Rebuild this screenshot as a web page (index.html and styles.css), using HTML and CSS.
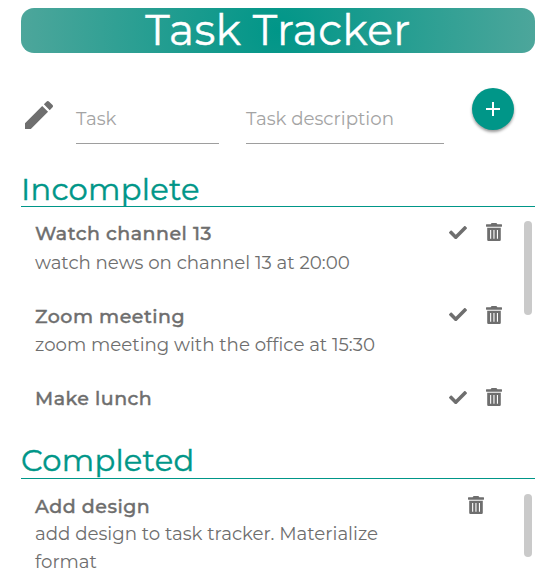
FILE: index.html
```html
<!DOCTYPE html>
<html lang="en">
<head>
<meta charset="utf-8">
<title>Task Tracker</title>
<link rel="stylesheet" href="styles.css">
</head>
<body>
<svg class="sprite" aria-hidden="true">
  <symbol id="check" viewBox="0 65 512 382"><path fill="currentColor" d="M173.898 439.404l-166.4-166.4c-9.997-9.997-9.997-26.206 0-36.204l36.203-36.204c9.997-9.998 26.207-9.998 36.204 0L192 312.69 432.095 72.596c9.997-9.997 26.207-9.997 36.204 0l36.203 36.204c9.997 9.997 9.997 26.206 0 36.204l-294.4 294.401c-9.998 9.997-26.207 9.997-36.204-.001z"/></symbol>
  <symbol id="trash" viewBox="0 0 16 18"><path fill="currentColor" fill-rule="evenodd" d="M.4 1.3H4.6L5.6 0h4.8l1 1.3h4.2q.4 0 .4.4v1.6q0 .4-.4.4H.4q-.4 0-.4-.4V1.7q0-.4.4-.4zM1.2 4.7h13.6v12.1a1.2 1.2 0 0 1-1.2 1.2h-11.2a1.2 1.2 0 0 1-1.2-1.2zM4.1 7v8.8h1.1V7zm3.3 0v8.8h1.1V7zm3.5 0v8.8H12V7z"/></symbol>
</svg>
<main class="app">
  <h1 class="title">Task Tracker</h1>
  <form class="entry">
    <svg class="pencil" viewBox="3 3 18 18"><path d="M3 17.25V21h3.75L17.81 9.94l-3.75-3.75L3 17.25zM20.71 7.04c.39-.39.39-1.02 0-1.41l-2.34-2.34c-.39-.39-1.02-.39-1.41 0l-1.83 1.83 3.75 3.75 1.83-1.83z"/></svg>
    <label class="field name">Task</label>
    <label class="field detail">Task description</label>
    <button class="add" type="button" aria-label="Add"><svg viewBox="0 0 14 14"><path d="M7 0v14M0 7h14"/></svg></button>
  </form>
  <section class="pending">
    <h2 class="heading">Incomplete</h2>
    <div class="list">
      <ul class="tasks">
        <li class="task"><div class="copy"><h3>Watch channel 13</h3><p>watch news on channel 13 at 20:00</p></div><div class="actions"><svg class="check"><use href="#check"/></svg><svg class="trash"><use href="#trash"/></svg></div></li>
        <li class="task"><div class="copy"><h3>Zoom meeting</h3><p>zoom meeting with the office at 15:30</p></div><div class="actions"><svg class="check"><use href="#check"/></svg><svg class="trash"><use href="#trash"/></svg></div></li>
        <li class="task"><div class="copy"><h3>Make lunch</h3></div><div class="actions"><svg class="check"><use href="#check"/></svg><svg class="trash"><use href="#trash"/></svg></div></li>
      </ul>
      <div class="thumb"></div>
    </div>
  </section>
  <section class="done">
    <h2 class="heading">Completed</h2>
    <div class="list">
      <ul class="tasks">
        <li class="task"><div class="copy"><h3>Add design</h3><p>add design to task tracker. Materialize format</p></div><div class="actions"><svg class="trash"><use href="#trash"/></svg></div></li>
      </ul>
      <div class="thumb"></div>
    </div>
  </section>
</main>
</body>
</html>
```

FILE: styles.css
```css
* { box-sizing: border-box; }
body { margin: 0; height: 579px; overflow: hidden; background: #fff; color: #6e6e6e; font-family: Montserrat, Inter, sans-serif; }
h1, h2, h3, p, ul { margin: 0; padding: 0; list-style: none; }
.sprite { display: none; }
.app { width: 514px; margin: 8px 0 0 21px; }
.title { height: 45px; border-radius: 13px; background: radial-gradient(circle, #009688, #4da69b); color: #fff; text-align: center; font-size: 42.6px; font-weight: 400; letter-spacing: .35px; line-height: 45px; -webkit-text-stroke: .4px; }
.entry { display: flex; height: 122px; padding: 35px 0 0 4px; align-items: flex-start; }
.pencil { width: 28px; height: 28px; margin-top: 13px; fill: #6e6e6e; }
.field { height: 56px; border-bottom: 1px solid #9e9e9e; color: #a4a4a4; font-size: 18.2px; line-height: 62px; white-space: nowrap; }
.name { width: 143px; margin-left: 23px; }
.detail { width: 198px; margin-left: 27px; }
.add { width: 42px; height: 42px; margin-left: 28px; padding: 14px; border: 0; border-radius: 50%; background: #009688; box-shadow: 0 2px 3px #0006; }
.add svg { display: block; width: 14px; height: 14px; fill: none; stroke: #fff; stroke-width: 2; }
.heading { height: 32px; border-bottom: 1px solid #009688; color: #009688; font-size: 30.6px; font-weight: 400; letter-spacing: .25px; line-height: 28px; -webkit-text-stroke: .4px; }
.list { display: flex; justify-content: space-between; padding-left: 14px; }
.pending .list { height: 240px; padding-top: 13px; }
.done .heading { line-height: 26px; }
.done .list { padding-top: 13px; }
.task { display: flex; width: 467px; height: 82.5px; justify-content: space-between; }
.copy { width: 370px; }
h3 { font-size: 19px; line-height: 28px; font-weight: 500; letter-spacing: .5px; -webkit-text-stroke: .4px; }
p { font-size: 18.22px; line-height: 28px; padding-top: 1px; }
.task:nth-child(2) p { padding-top: 0; }
.done h3 { padding-top: 1px; }
.done p { margin-top: -1px; padding-top: 0; }
.actions { display: flex; gap: 19px; color: #6e6e6e; }
.done .actions { padding-right: 18px; }
.check { width: 18px; height: 13.4px; margin-top: 5.5px; }
.trash { width: 16px; height: 18px; margin-top: 3px; }
.done .trash { margin-top: 4px; }
.thumb { width: 8px; height: 94px; margin: 1px 3px 0 0; border-radius: 4px; background: #cacaca; }
.done .thumb { height: 63px; margin-top: 2px; }
```
